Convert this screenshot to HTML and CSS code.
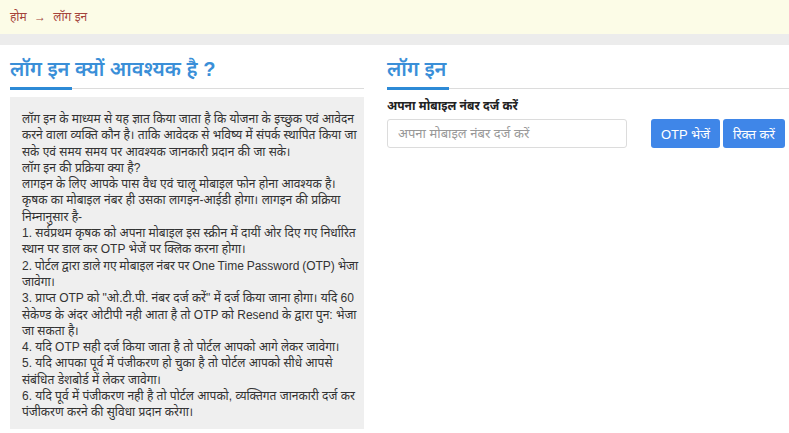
FILE: index.html
```html
<!DOCTYPE html>
<html>

<head>
  <meta charset="utf-8">
  <meta name="viewport" content="width=device-width, initial-scale=1.0">
  <link rel="stylesheet" href="styles.css">
</head>

<body>
  <div class="breadcrumb">
    <a href="#">होम</a> <span class="arrow">&rarr;</span> <span>लॉग इन</span>
  </div>
  <div class="band"></div>

  <div class="main">
    <div class="col-left">
      <h2 class="title">लॉग इन क्यों आवश्यक है ?</h2>
      <div class="info">
        लॉग इन के माध्यम से यह ज्ञात किया जाता है कि योजना के इच्छुक एवं आवेदन करने वाला व्यक्ति कौन है। ताकि आवेदक से भविष्य में संपर्क स्थापित किया जा सके एवं समय समय पर आवश्यक जानकारी प्रदान की जा सके।<br>
        लॉग इन की प्रक्रिया क्या है?<br>
        लागइन के लिए आपके पास वैध एवं चालू मोबाइल फोन होना आवश्यक है। कृषक का मोबाइल नंबर ही उसका लागइन-आईडी होगा। लागइन की प्रक्रिया निम्नानुसार है-<br>
        1. सर्वप्रथम कृषक को अपना मोबाइल इस स्क्रीन में दायीं ओर दिए गए निर्धारित स्थान पर डाल कर OTP भेजें पर क्लिक करना होगा।<br>
        <span class="tight">2. पोर्टल द्वारा डाले गए मोबाइल नंबर पर One Time Password (OTP) भेजा जावेगा।</span><br>
        3. प्राप्त OTP को "ओ.टी.पी. नंबर दर्ज करें" में दर्ज किया जाना होगा। यदि 60 सेकेण्ड के अंदर ओटीपी नही आता है तो OTP को Resend के द्वारा पुन: भेजा जा सकता है।<br>
        4. यदि OTP सही दर्ज किया जाता है तो पोर्टल आपको आगे लेकर जावेगा।<br>
        5. यदि आपका पूर्व में पंजीकरण हो चुका है तो पोर्टल आपको सीधे आपसे संबंधित डेशबोर्ड में लेकर जावेगा।<br>
        6. यदि पूर्व में पंजीकरण नही है तो पोर्टल आपको, व्यक्तिगत जानकारी दर्ज कर पंजीकरण करने की सुविधा प्रदान करेगा।
      </div>
    </div>

    <div class="col-right">
      <h2 class="title">लॉग इन</h2>
      <label class="label" for="mobile">अपना मोबाइल नंबर दर्ज करें</label>
      <div class="form-row">
        <input type="text" id="mobile" class="mobile" placeholder="अपना मोबाइल नंबर दर्ज करें">
        <button class="btn btn-otp">OTP भेजें</button>
        <button class="btn">रिक्त करें</button>
      </div>
    </div>
  </div>
</body>

</html>
```

FILE: styles.css
```css
body {
  margin: 0;
  padding: 0;
  font-family: 'Liberation Sans', 'Noto Sans', sans-serif;
  color: #333;
  background-color: #fff;
  overflow: hidden;
}

.breadcrumb {
  background-color: #fcfce7;
  height: 34px;
  box-sizing: border-box;
  padding: 8px 10px 0;
  font-size: 12px;
  color: #a5443c;
}

.breadcrumb a {
  color: #a5443c;
  text-decoration: none;
}

.breadcrumb .arrow {
  margin: 0 4px;
  font-weight: bold;
}

.band {
  height: 11px;
  background-color: #ececec;
}

.main {
  display: flex;
  padding-left: 10px;
  gap: 23px;
}

.col-left {
  width: 354px;
  flex-shrink: 0;
}

.col-right {
  flex: 1;
}

.title {
  position: relative;
  margin: 10px 0 0;
  padding-bottom: 6px;
  font-size: 20px;
  font-weight: 600;
  color: #3a8fd8;
  border-bottom: 1px solid #dcdcdc;
}

.title::after {
  content: "";
  position: absolute;
  left: 0;
  bottom: -2px;
  width: 62px;
  height: 3px;
  background-color: #2d8ad6;
}

.info {
  margin-top: 8px;
  background-color: #efefef;
  padding: 14px 1px 12px 12px;
  font-size: 12px;
  line-height: 16.3px;
  color: #333;
  height: 332px;
  box-sizing: border-box;
}

.info .tight {
  word-spacing: -0.5px;
}

.label {
  display: block;
  margin-top: 8px;
  font-size: 12px;
  font-weight: bold;
  color: #222;
}

.form-row {
  display: flex;
  margin-top: 5px;
}

.mobile {
  width: 240px;
  height: 29px;
  box-sizing: border-box;
  border: 1px solid #dcdcdc;
  border-radius: 3px;
  padding: 0 10px;
  font-family: inherit;
  font-size: 13px;
  margin-right: 24px;
}

.mobile::placeholder {
  color: #999;
}

.btn {
  background-color: #3f86e8;
  color: #fff;
  border: none;
  border-radius: 3px;
  height: 29px;
  padding: 0 10px;
  font-family: inherit;
  font-size: 13px;
  margin-right: 3px;
  cursor: pointer;
}
```
